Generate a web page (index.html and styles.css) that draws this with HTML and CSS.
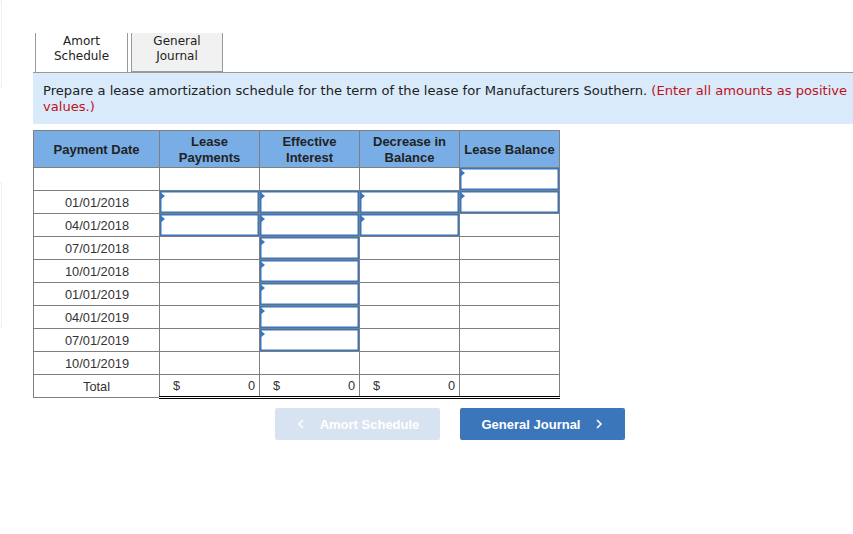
FILE: index.html
```html
<!DOCTYPE html>
<html lang="en">
<head>
<meta charset="utf-8">
<title>Lease amortization schedule</title>
<link rel="stylesheet" href="styles.css">
</head>
<body>
<div class="edge edge-a"></div>
<div class="edge edge-b"></div>
<main class="page">
  <nav class="tabs">
    <div class="tab tab-active">Amort<br>Schedule</div>
    <div class="tab tab-idle">General<br>Journal</div>
  </nav>
  <div class="prompt">Prepare a lease amortization schedule for the term of the lease for Manufacturers Southern. <span class="red">(Enter all amounts as positive values.)</span></div>
  <table class="sched">
    <colgroup><col class="c1"><col class="c2"><col class="c2"><col class="c2"><col class="c2"></colgroup>
    <thead>
      <tr><th>Payment Date</th><th>Lease<br>Payments</th><th>Effective<br>Interest</th><th>Decrease in<br>Balance</th><th>Lease Balance</th></tr>
    </thead>
    <tbody>
      <tr><td></td><td></td><td></td><td></td><td class="in"></td></tr>
      <tr><td class="date">01/01/2018</td><td class="in"></td><td class="in"></td><td class="in"></td><td class="in"></td></tr>
      <tr><td class="date">04/01/2018</td><td class="in"></td><td class="in"></td><td class="in"></td><td></td></tr>
      <tr><td class="date">07/01/2018</td><td></td><td class="in"></td><td></td><td></td></tr>
      <tr><td class="date">10/01/2018</td><td></td><td class="in"></td><td></td><td></td></tr>
      <tr><td class="date">01/01/2019</td><td></td><td class="in"></td><td></td><td></td></tr>
      <tr><td class="date">04/01/2019</td><td></td><td class="in"></td><td></td><td></td></tr>
      <tr><td class="date">07/01/2019</td><td></td><td class="in"></td><td></td><td></td></tr>
      <tr><td class="date">10/01/2019</td><td></td><td></td><td></td><td></td></tr>
      <tr class="total">
        <td class="label">Total</td>
        <td class="sum"><div class="money"><span>$</span><span>0</span></div></td>
        <td class="sum"><div class="money"><span>$</span><span>0</span></div></td>
        <td class="sum"><div class="money"><span>$</span><span>0</span></div></td>
        <td class="sum"></td>
      </tr>
    </tbody>
  </table>
  <div class="nav-row">
    <button class="btn btn-off" type="button"><svg class="chev" viewBox="0 0 8 12"><path d="M6 2 2 6l4 4"/></svg>Amort Schedule</button>
    <button class="btn btn-on" type="button">General Journal<svg class="chev" viewBox="0 0 8 12"><path d="M2 2l4 4-4 4"/></svg></button>
  </div>
</main>
</body>
</html>
```
FILE: styles.css
```css
* { box-sizing: border-box; }
html, body { margin: 0; padding: 0; background: #fff; }
body { width: 853px; height: 534px; overflow: hidden; position: relative; }
.edge { position: absolute; left: 0; width: 2px; border: 1px solid #f0f0f0; border-left: 0; }
.edge-a { top: 0; height: 88px; }
.edge-b { top: 182px; height: 146px; }
.page { padding: 33px 0 0 33px; }
.tabs { display: flex; height: 39px; padding-left: 2px; gap: 3px; }
.tab { width: 93px; height: 39px; text-align: center; padding-top: 1px; font: 12px/15px "DejaVu Sans", sans-serif; color: #222; border: 1px solid #999; border-top: 0; }
.tab-active { background: #fff; border-bottom: 0; }
.tab-idle { width: 92px; background: #f1f1f1; }
.prompt { background: #d9ebfa; height: 52px; border-top: 1px solid #999; padding: 10px 0 0 10px; font: 13.1px/16px "DejaVu Sans", sans-serif; color: #222; width: 820px; }
.red { color: #c0111c; }
.sched { border-collapse: collapse; table-layout: fixed; width: 527px; margin-top: 6px; font-family: "Liberation Sans", sans-serif; font-size: 12.8px; color: #333; }
.c1 { width: 126px; }
.c2 { width: 100px; }
.sched th { background: #78ade6; border: 1px solid #7f7f7f; height: 37px; padding: 1px 0 0; font-size: 13px; line-height: 16px; font-weight: 700; color: #222; }
.sched td { border: 1px solid #7f7f7f; height: 23px; padding: 1px 0 0; text-align: center; position: relative; }
.sched td.date { padding-left: 1px; }
.sched td.in { box-shadow: inset 0 0 0 1.5px #3a76bb; }
.sched td.in::before { content: ""; position: absolute; left: 0; top: 1px; border-left: 5px solid #3a76bb; border-top: 4px solid transparent; border-bottom: 4px solid transparent; }
.total .label { padding-right: 0; }
.sched td.sum { border-top: 1px solid #000; border-bottom: 3px double #000; text-align: left; padding-top: 0; }
.money { display: flex; justify-content: space-between; padding: 0 4px 0 13px; }
.nav-row { display: flex; gap: 20px; padding: 9px 0 0 242px; }
.btn { width: 165px; height: 32px; border: 0; border-radius: 2px; font: 700 13px "Liberation Sans", sans-serif; color: #fff; display: flex; align-items: center; justify-content: center; padding: 0 0 0 1px; gap: 15px; }
.btn-off { background: #d8e3f1; }
.btn-on { background: #3b76bb; padding: 0; }
.chev { width: 8px; height: 12px; fill: none; stroke: #fff; stroke-width: 1.6; }
```
